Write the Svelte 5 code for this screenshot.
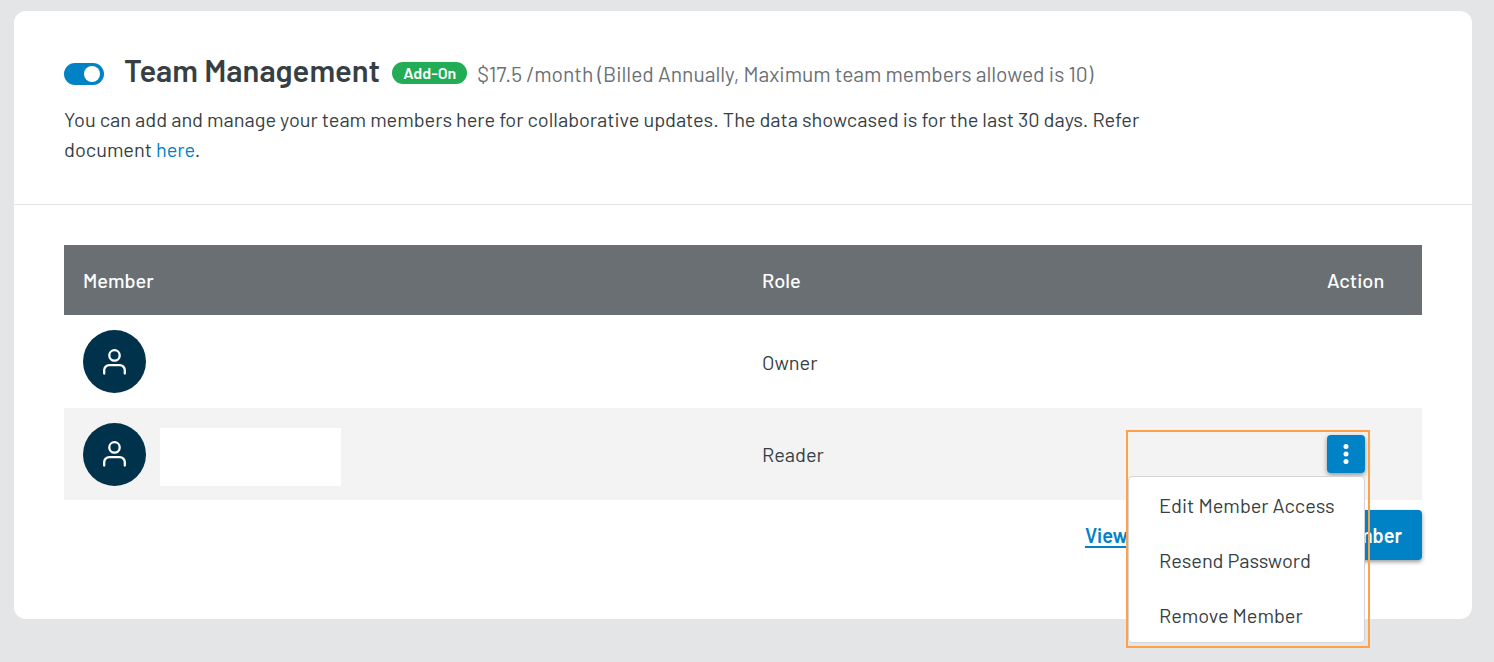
<script>
  let enabled = $state(true);
  let menuOpen = $state(true);

  const members = [
    { role: 'Owner', named: false, actions: false },
    { role: 'Reader', named: true, actions: true }
  ];
  const actions = ['Edit Member Access', 'Resend Password', 'Remove Member'];
</script>

<main class="card">
  <header class="intro">
    <div class="heading">
      <input class="toggle" type="checkbox" role="switch" aria-label="Team Management" bind:checked={enabled} />
      <h1>Team Management</h1>
      <span class="badge">Add-On</span>
      <span class="price">$17.5 /month (Billed Annually, Maximum team members allowed is 10)</span>
    </div>
    <p>
      You can add and manage your team members here for collaborative updates. The data showcased is for the last 30
      days. Refer document <a href="#document">here</a>.
    </p>
  </header>

  <section class="team">
    <table>
      <thead>
        <tr>
          <th class="member">Member</th>
          <th>Role</th>
          <th class="action">Action</th>
        </tr>
      </thead>
      <tbody>
        {#each members as member}
          <tr>
            <td>
              <div class="person">
                <span class="avatar">
                  <svg viewBox="0 0 24 28" width="24" height="28" aria-hidden="true">
                    <circle cx="11.5" cy="7.4" r="5.2" />
                    <path d="M1.2 25.6v-3.4a5 5 0 0 1 5-5h10.6a5 5 0 0 1 5 5v3.4" />
                  </svg>
                </span>
                {#if member.named}<span class="name"></span>{/if}
              </div>
            </td>
            <td>{member.role}</td>
            <td>
              {#if member.actions}
                <div class="actions">
                  <button class="more" aria-label="Member actions" aria-expanded={menuOpen} onclick={() => (menuOpen = !menuOpen)}>
                    <svg viewBox="0 0 6 22" width="6" height="22" aria-hidden="true">
                      <circle cx="3" cy="3.4" r="2.5" />
                      <circle cx="3" cy="11" r="2.5" />
                      <circle cx="3" cy="18.6" r="2.5" />
                    </svg>
                  </button>
                  {#if menuOpen}
                    <div class="frame"></div>
                    <div class="menu">
                      {#each actions as label}
                        <button>{label}</button>
                      {/each}
                    </div>
                  {/if}
                </div>
              {/if}
            </td>
          </tr>
        {/each}
      </tbody>
    </table>
    <footer>
      <a href="#logs">View Logs</a>
      <button class="add">Add Team Member</button>
    </footer>
  </section>
</main>

<style>
  :global(body) {
    background: #e4e5e7;
    color: #373f45;
    font-family: Barlow, Roboto, sans-serif;
    font-size: 20px;
  }
  .card {
    margin: 11px 22px 43px 14px;
    background: #fff;
    border-radius: 12px;
  }
  .intro {
    padding: 42px 50px 40px;
    border-bottom: 1px solid #e2e4e5;
  }
  .heading {
    display: flex;
    align-items: center;
    height: 40px;
  }
  .toggle {
    appearance: none;
    display: flex;
    align-items: center;
    justify-content: flex-start;
    box-sizing: border-box;
    flex: none;
    width: 40px;
    height: 22px;
    margin: 2px 20px 0 0;
    padding: 0 4px;
    border-radius: 11px;
    background: #9aa0a4;
    cursor: pointer;
  }
  .toggle:checked {
    justify-content: flex-end;
    background: #0082c6;
  }
  .toggle::before {
    content: '';
    width: 16px;
    height: 16px;
    border-radius: 50%;
    background: #fff;
  }
  h1 {
    margin: 0 12px 6px 0;
    font-size: 31px;
    line-height: 38px;
    font-weight: 600;
    white-space: nowrap;
  }
  .badge {
    padding: 0 11px;
    margin-right: 10px;
    border-radius: 11px;
    background: #22ac55;
    color: #fff;
    font-size: 16px;
    line-height: 22px;
    font-weight: 600;
    white-space: nowrap;
  }
  .price {
    color: #6b7075;
    font-size: 21px;
  }
  p {
    width: 80%;
    margin: 11px 0 0;
    line-height: 30px;
  }
  a {
    color: #0082c6;
    text-decoration: none;
  }
  .team {
    padding: 40px 50px 59px;
  }
  table {
    width: 100%;
    table-layout: fixed;
    border-collapse: collapse;
  }
  th {
    box-sizing: border-box;
    height: 70px;
    background: #6a6f73;
    color: #fff;
    font-weight: 500;
  }
  th,
  td {
    padding: 0 19px;
    text-align: left;
  }
  .member {
    width: 50%;
  }
  .action {
    width: 114px;
  }
  th:not(.action) {
    padding-right: 0;
  }
  td {
    height: 92px;
  }
  tbody tr:first-child td {
    height: 93px;
  }
  tbody tr:nth-child(even) {
    background: #f3f3f3;
  }
  .person {
    display: flex;
    align-items: center;
    gap: 14px;
  }
  .avatar {
    display: grid;
    place-items: center;
    width: 63px;
    height: 63px;
    border-radius: 50%;
    background: #00324b;
  }
  .avatar svg {
    fill: none;
    stroke: #fff;
    stroke-width: 2.3;
    stroke-linecap: round;
  }
  .name {
    width: 181px;
    height: 58px;
    margin-top: 6px;
    background: #fff;
  }
  button {
    border: 0;
    font: inherit;
    cursor: pointer;
  }
  .actions {
    position: relative;
    width: 38px;
    height: 38px;
  }
  .more {
    display: grid;
    place-items: center;
    width: 38px;
    height: 38px;
    padding: 0;
    border-radius: 4px;
    background: #0082c6;
    box-shadow: 0 2px 5px rgb(0 0 0 / 40%);
  }
  .more svg {
    fill: #fff;
  }
  .frame {
    position: absolute;
    top: -5px;
    right: -5px;
    box-sizing: border-box;
    width: 244px;
    height: 218px;
    border: 2px solid #ffa148;
    pointer-events: none;
    z-index: 2;
  }
  .menu {
    position: absolute;
    top: 41px;
    right: 0;
    display: flex;
    flex-direction: column;
    box-sizing: border-box;
    width: 237px;
    border: 1px solid #d3d4d5;
    border-radius: 4px;
    background: #fff;
    z-index: 1;
  }
  .menu button {
    height: 55px;
    padding: 0 30px;
    background: none;
    color: inherit;
    text-align: left;
    white-space: nowrap;
  }
  footer {
    display: flex;
    align-items: center;
    justify-content: flex-end;
    gap: 45px;
    padding-top: 10px;
    font-weight: 600;
  }
  footer a {
    text-decoration: underline;
    text-underline-offset: 3px;
    text-decoration-thickness: 2px;
  }
  .add {
    height: 50px;
    padding: 0 20px;
    border-radius: 4px;
    background: #0082c6;
    color: #fff;
    box-shadow: 0 2px 4px rgb(0 0 0 / 40%);
  }
</style>
